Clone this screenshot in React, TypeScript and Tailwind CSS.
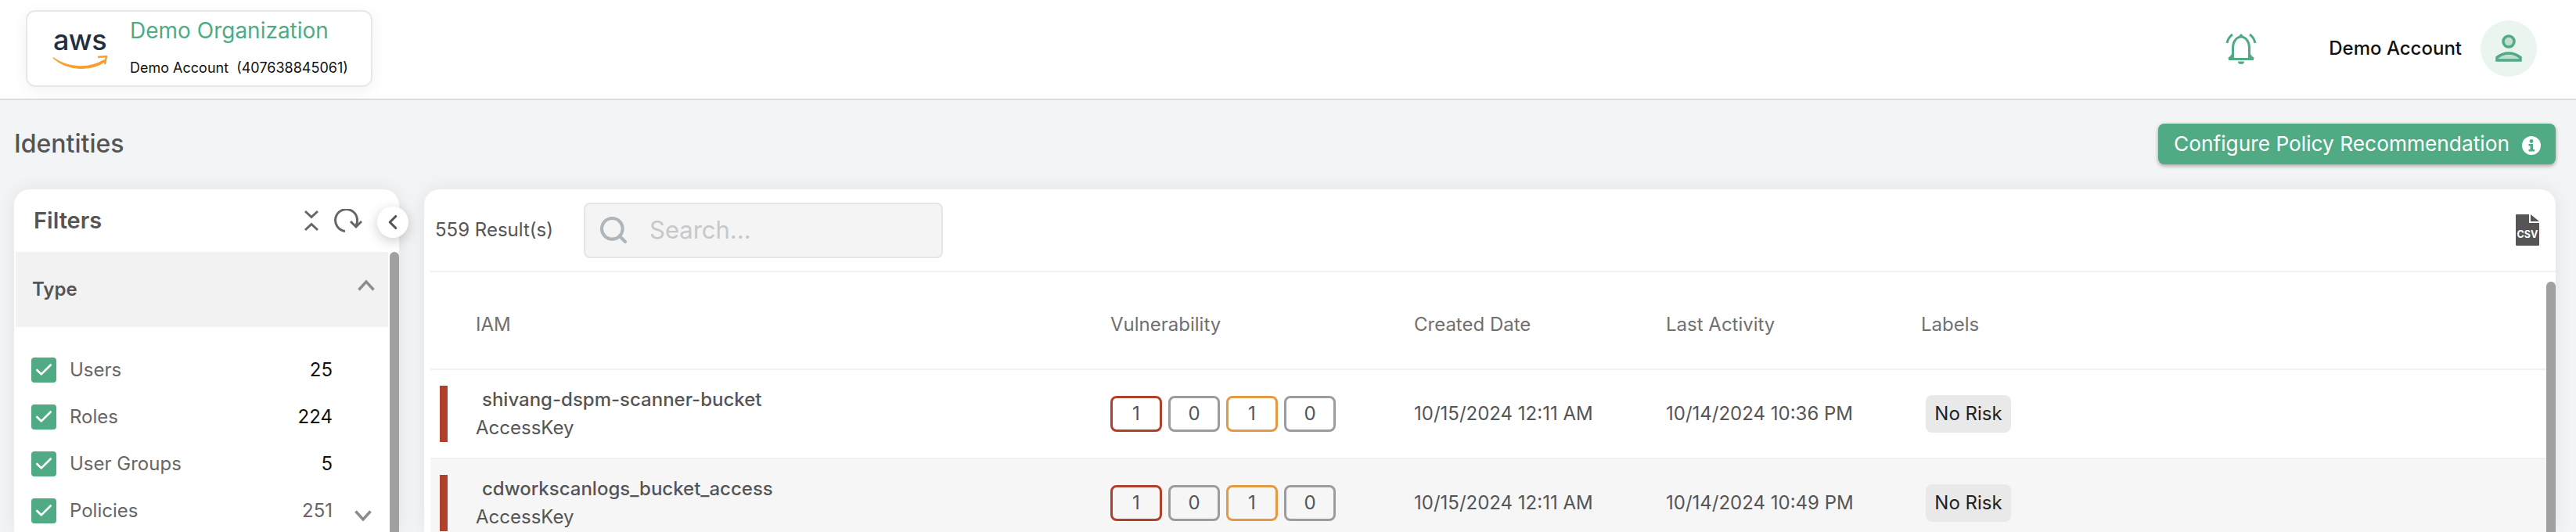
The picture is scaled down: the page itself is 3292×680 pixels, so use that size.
import React from 'react'
import { Check, ChevronLeft, Search } from 'lucide-react'

type FilterItem = { label: string; count: number; muted?: boolean; more?: boolean }
type Row = { name: string; last: string; striped?: boolean }

const filterItems: FilterItem[] = [
  { label: 'Users', count: 25 },
  { label: 'Roles', count: 224 },
  { label: 'User Groups', count: 5 },
  { label: 'Policies', count: 251, muted: true, more: true },
]

const rows: Row[] = [
  { name: 'shivang-dspm-scanner-bucket', last: '10/14/2024 10:36 PM' },
  { name: 'cdworkscanlogs_bucket_access', last: '10/14/2024 10:49 PM', striped: true },
]

const AwsLogo = () => (
  <div className="flex w-[72px] flex-col items-center">
    <span className="text-[36px] leading-[32px] font-medium tracking-[-0.5px] text-[#232f3e]">aws</span>
    <svg width="70" height="18" viewBox="0 0 70 18" className="mt-[4px]">
      <path d="M1 3 C20 16 46 18 66 6 L68 7 C50 20 20 20 1 3 Z" fill="#f79f2f" stroke="#f79f2f" strokeWidth="1.5" />
      <path d="M58 2 L69 1 L67 11" fill="none" stroke="#f79f2f" strokeWidth="2.4" />
    </svg>
  </div>
)

const BellIcon = () => (
  <svg width="40" height="40" viewBox="16 24 40 40" fill="none" stroke="#50ab84" strokeWidth="3">
    <circle cx="36" cy="27.5" r="2" fill="#50ab84" stroke="none" />
    <path d="M25.5 57 V43 A10.5 14 0 0 1 46.5 43 V57" />
    <path d="M20 57 Q24 55 25 52 M52 57 Q48 55 47 52 M20 57.5 H52" />
    <path d="M32 60.5 h8 a4 3.5 0 0 1 -8 0 Z" fill="#50ab84" stroke="none" />
    <path d="M18 37 Q19.5 30 25 26 M54 37 Q52.5 30 47 26" />
  </svg>
)

const UserAvatar = () => (
  <div className="flex h-[72px] w-[72px] items-center justify-center rounded-full bg-[#eaf5f0]">
    <svg width="72" height="72" viewBox="0 0 72 72" fill="#bfdfd1" stroke="#50ab84" strokeWidth="3.5">
      <circle cx="36" cy="27" r="7" />
      <path d="M21 51 V47.5 Q28 42 36 42 Q44 42 51 47.5 V51 Z" />
    </svg>
  </div>
)

const InfoDot = () => (
  <svg width="24" height="24" viewBox="0 0 24 24" className="mt-[4px]">
    <circle cx="12" cy="12" r="12" fill="#fff" />
    <circle cx="12" cy="6.5" r="2.4" fill="#50ab84" />
    <path d="M8.5 10 H14 V17 H16 V19.5 H8.5 V17 H10.5 V12.5 H8.5 Z" fill="#50ab84" />
  </svg>
)

const CollapseIcon = () => (
  <svg width="18" height="28" viewBox="0 0 18 28" fill="none" stroke="#666" strokeWidth="3">
    <path d="M1 2 L9 9.5 L17 2 M1 26 L9 18.5 L17 26" />
  </svg>
)

const RefreshIcon = () => (
  <svg width="37" height="30" viewBox="426 267 37 30" fill="none" stroke="#666" strokeWidth="3">
    <path d="M441 295.5 A14 14 0 1 1 455 288" />
    <path d="M448 283 L455 290 L462 283" />
  </svg>
)

const CsvIcon = () => (
  <svg width="30" height="40" viewBox="0 0 30 40">
    <path d="M1 0 H17 V11 H30 V39 Q30 40 29 40 H1 Q0 40 0 39 V1 Q0 0 1 0 Z" fill="#555" />
    <path d="M19 0 L30 9 H19 Z" fill="#555" />
    <text x="15" y="30" textAnchor="middle" fontSize="12.5" fontWeight="700" fill="#fff" fontFamily="Inter, sans-serif">
      CSV
    </text>
  </svg>
)

const Chevron = ({ up }: { up?: boolean }) => (
  <svg width="22" height="15" viewBox="0 0 22 15" fill="none" stroke="#8c8c8c" strokeWidth="3.5">
    <path d={up ? 'M1.5 13.5 L11 3 L20.5 13.5' : 'M1.5 1.5 L11 12 L20.5 1.5'} />
  </svg>
)

const Badge = ({ value, color }: { value: number; color: string }) => (
  <div className={`flex h-[46px] w-[66px] items-center justify-center rounded-lg border-[3px] text-[24px] text-[#555] ${color}`}>
    {value}
  </div>
)

const FiltersCard = () => (
  <aside className="relative h-[438px] w-[492px] shrink-0 rounded-t-[20px] bg-white shadow-[0_0_24px_rgba(0,0,0,0.08)]">
    <div className="flex h-[80px] items-center justify-between pr-[47px] pl-[25px]">
      <span className="text-[29px] font-semibold text-[#555]">Filters</span>
      <div className="flex items-center gap-[19px]">
        <CollapseIcon />
        <RefreshIcon />
      </div>
    </div>
    <button className="absolute top-[22px] left-[464px] flex h-[40px] w-[40px] items-center justify-center rounded-full bg-white shadow-[0_4px_16px_rgba(0,0,0,0.2)]">
      <ChevronLeft size={30} color="#555" strokeWidth={2.5} />
    </button>
    <div className="flex gap-[2px] pl-[2px]">
      <div className="w-[476px]">
        <div className="flex h-[96px] items-center justify-between bg-[#f2f2f2] pr-[17px] pl-[21px]">
          <span className="text-[24px] font-semibold text-[#555]">Type</span>
          <span className="mb-[12px]">
            <Chevron up />
          </span>
        </div>
        <div className="flex flex-col gap-[28px] pt-[39px] pl-[20px]">
          {filterItems.map((item) => (
            <div key={item.label} className="flex h-[32px] items-center">
              <div className="flex h-[32px] w-[32px] items-center justify-center rounded-[4px] bg-[#50ab84]">
                <Check size={26} color="#fff" strokeWidth={2.5} />
              </div>
              <span className="ml-[17px] flex-1 text-[24px] text-[#666]">{item.label}</span>
              <span className={`text-[24px] ${item.muted ? 'text-[#666]' : 'text-[#111]'}`}>{item.count}</span>
              <div className="w-[71px] pl-[28px]">
                {item.more && (
                  <div className="mt-[12px]">
                    <Chevron />
                  </div>
                )}
              </div>
            </div>
          ))}
        </div>
      </div>
      <div className="h-[358px] w-[12px] rounded-t-[6px] bg-[#a0a0a0]" />
    </div>
  </aside>
)

const ResultsCard = () => (
  <section className="h-[438px] flex-1 rounded-t-[20px] bg-white shadow-[0_0_24px_rgba(0,0,0,0.08)]">
    <div className="flex h-[104px] items-center pr-[21px] pl-[14px]">
      <span className="w-[190px] text-[24px] text-[#555]">559 Result(s)</span>
      <div className="flex h-[71px] w-[459px] items-center gap-[26px] rounded-lg border-2 border-[#e5e5e5] bg-[#f4f4f4] pl-[16px]">
        <Search size={40} color="#aeb6ba" strokeWidth={2.5} />
        <span className="text-[31px] text-[#c6c8c9]">Search...</span>
      </div>
      <div className="ml-auto flex">
        <CsvIcon />
      </div>
    </div>
    <div className="ml-[8px] h-[2px] bg-[#f1f1f1]" />
    <div className="flex pl-[8px]">
      <div className="flex-1">
        <div className="grid h-[125px] grid-cols-[869px_388px_322px_326px_1fr] items-center border-b-2 border-[#f1f1f1] pt-[11px] text-[24px] text-[#707070]">
          <span className="pl-[58px]">IAM</span>
          <span>Vulnerability</span>
          <span>Created Date</span>
          <span>Last Activity</span>
          <span>Labels</span>
        </div>
        {rows.map((row) => (
          <div
            key={row.name}
            className={`grid h-[114px] grid-cols-[869px_388px_322px_326px_1fr] items-center border-b-2 border-[#f1f1f1] text-[24px] text-[#555] ${row.striped ? 'bg-[#f6f6f6]' : ''}`}
          >
            <div className="flex items-center pl-[12px]">
              <div className="h-[72px] w-[10px] bg-[#af402c]" />
              <div className="ml-[36px] leading-[36px]">
                <div className="pl-[8px] font-medium">{row.name}</div>
                <div>AccessKey</div>
              </div>
            </div>
            <div className="flex gap-[8px]">
              <Badge value={1} color="border-[#af402c]" />
              <Badge value={0} color="border-[#9c9c9c]" />
              <Badge value={1} color="border-[#e49a45]" />
              <Badge value={0} color="border-[#9c9c9c]" />
            </div>
            <span>10/15/2024 12:11 AM</span>
            <span>{row.last}</span>
            <div className="pl-[6px]">
              <span className="inline-flex h-[48px] w-[109px] items-center justify-center rounded-lg bg-[#e9e9e9] text-[#222]">
                No Risk
              </span>
            </div>
          </div>
        ))}
      </div>
      <div className="mt-[12px] h-[320px] w-[12px] rounded-t-[6px] bg-[#a0a0a0]" />
    </div>
  </section>
)

export default function App() {
  return (
    <div className="flex h-[680px] w-[3292px] flex-col overflow-hidden bg-[#f3f4f6] font-[Inter,sans-serif]">
      <header className="flex h-[128px] shrink-0 items-center justify-between border-b-2 border-[#dcdcdc] bg-white pr-[50px] pb-[2px] pl-[33px]">
        <div className="flex h-[98px] w-[443px] items-center gap-[28px] rounded-[12px] border-2 border-[#e8e8e8] bg-white pl-[31px] shadow-[0_4px_20px_rgba(0,0,0,0.06)]">
          <AwsLogo />
          <div className="flex h-full flex-col">
            <span className="mt-[4px] text-[28px] leading-[40px] text-[#50ab84]">Demo Organization</span>
            <span className="mt-[15px] text-[18px] leading-[26px] whitespace-pre text-[#111]">Demo Account  (407638845061)</span>
          </div>
        </div>
        <div className="flex items-center">
          <BellIcon />
          <span className="mr-[24px] ml-[92px] text-[24px] font-medium text-[#111]">Demo Account</span>
          <UserAvatar />
        </div>
      </header>

      <main className="flex flex-1 flex-col pr-[26px] pl-[18px]">
        <div className="mt-[30px] flex h-[52px] items-center justify-between">
          <h1 className="text-[32px] font-medium text-[#555]">Identities</h1>
          <button className="flex h-[52px] items-center gap-[16px] rounded-lg bg-[#50ab84] pr-[19px] pl-[20px] text-[26.3px] text-white shadow-[0_2px_5px_rgba(0,0,0,0.35)]">
            Configure Policy Recommendation
            <InfoDot />
          </button>
        </div>
        <div className="mt-[32px] flex gap-[32px]">
          <FiltersCard />
          <ResultsCard />
        </div>
      </main>
    </div>
  )
}
